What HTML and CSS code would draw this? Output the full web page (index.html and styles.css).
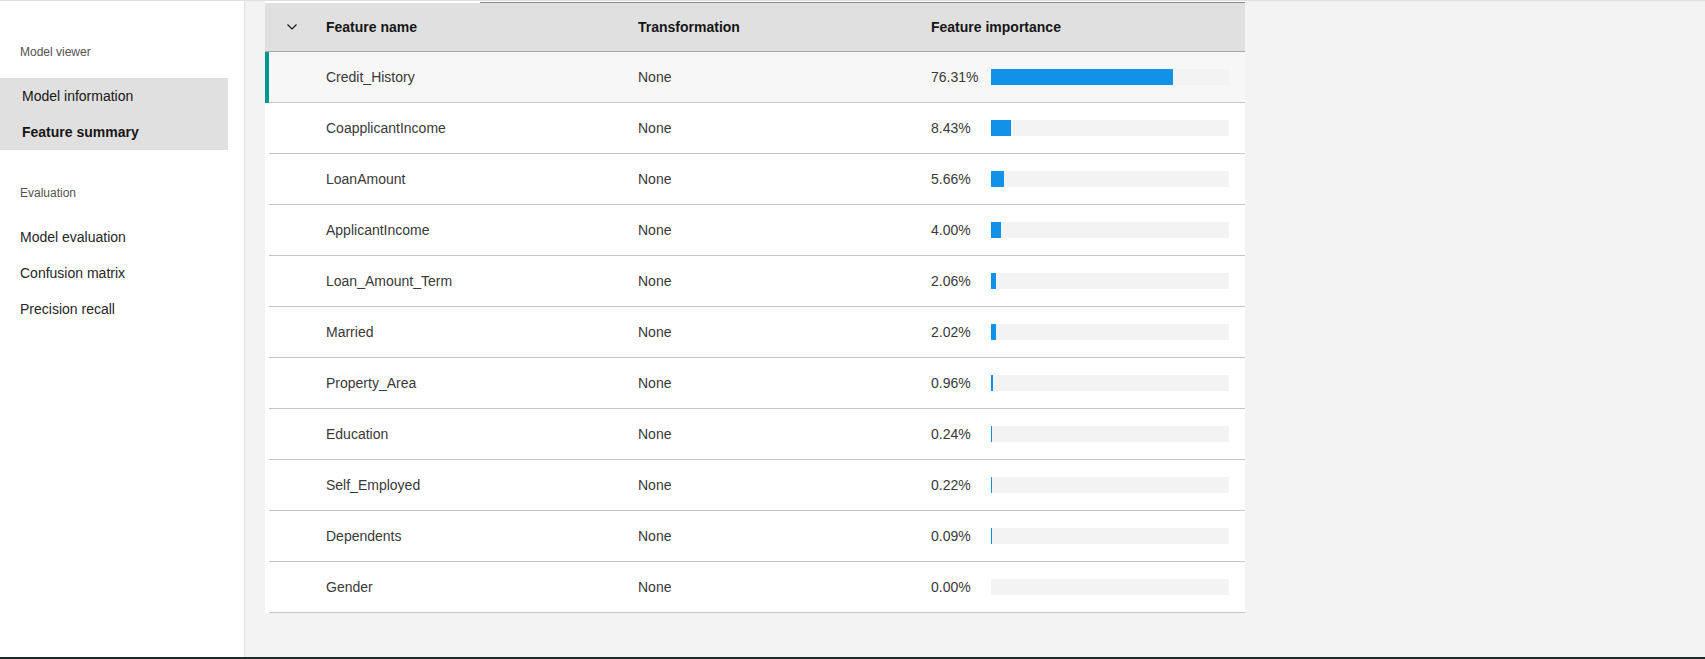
FILE: index.html
```html
<!DOCTYPE html>
<html lang="en">
<head>
<meta charset="utf-8">
<title>Feature summary</title>
<link rel="stylesheet" href="styles.css">
</head>
<body>
<div class="page">
  <aside class="sidebar">
    <div class="nav-label first">Model viewer</div>
    <div class="nav-group active-group">
      <div class="nav-item indent">Model information</div>
      <div class="nav-item indent current">Feature summary</div>
    </div>
    <div class="nav-label second">Evaluation</div>
    <div class="nav-group">
      <div class="nav-item">Model evaluation</div>
      <div class="nav-item">Confusion matrix</div>
      <div class="nav-item">Precision recall</div>
    </div>
  </aside>
  <main class="content">
    <div class="table">
      <div class="table-top"><span class="top-blank"></span><span class="top-line"></span></div>
      <div class="thead">
        <div class="cell-ind"></div>
        <div class="cell-exp">
          <svg width="10" height="6" viewBox="0 0 10 6"><path d="M0.5 0.5 L5 5 L9.5 0.5" fill="none" stroke="#161616" stroke-width="1.2"/></svg>
        </div>
        <div class="cell-name">Feature name</div>
        <div class="cell-trans">Transformation</div>
        <div class="cell-imp">Feature importance</div>
      </div>

      <div class="row hover">
        <div class="cell-ind selected"></div>
        <div class="row-body">
          <div class="cell-exp"></div>
          <div class="cell-name">Credit_History</div>
          <div class="cell-trans">None</div>
          <div class="cell-imp"><span class="pct">76.31%</span><span class="track"><span class="fill nz" style="width:76.31%"></span></span></div>
        </div>
      </div>
      <div class="row">
        <div class="cell-ind"></div>
        <div class="row-body">
          <div class="cell-exp"></div>
          <div class="cell-name">CoapplicantIncome</div>
          <div class="cell-trans">None</div>
          <div class="cell-imp"><span class="pct">8.43%</span><span class="track"><span class="fill nz" style="width:8.43%"></span></span></div>
        </div>
      </div>
      <div class="row">
        <div class="cell-ind"></div>
        <div class="row-body">
          <div class="cell-exp"></div>
          <div class="cell-name">LoanAmount</div>
          <div class="cell-trans">None</div>
          <div class="cell-imp"><span class="pct">5.66%</span><span class="track"><span class="fill nz" style="width:5.66%"></span></span></div>
        </div>
      </div>
      <div class="row">
        <div class="cell-ind"></div>
        <div class="row-body">
          <div class="cell-exp"></div>
          <div class="cell-name">ApplicantIncome</div>
          <div class="cell-trans">None</div>
          <div class="cell-imp"><span class="pct">4.00%</span><span class="track"><span class="fill nz" style="width:4.00%"></span></span></div>
        </div>
      </div>
      <div class="row">
        <div class="cell-ind"></div>
        <div class="row-body">
          <div class="cell-exp"></div>
          <div class="cell-name">Loan_Amount_Term</div>
          <div class="cell-trans">None</div>
          <div class="cell-imp"><span class="pct">2.06%</span><span class="track"><span class="fill nz" style="width:2.06%"></span></span></div>
        </div>
      </div>
      <div class="row">
        <div class="cell-ind"></div>
        <div class="row-body">
          <div class="cell-exp"></div>
          <div class="cell-name">Married</div>
          <div class="cell-trans">None</div>
          <div class="cell-imp"><span class="pct">2.02%</span><span class="track"><span class="fill nz" style="width:2.02%"></span></span></div>
        </div>
      </div>
      <div class="row">
        <div class="cell-ind"></div>
        <div class="row-body">
          <div class="cell-exp"></div>
          <div class="cell-name">Property_Area</div>
          <div class="cell-trans">None</div>
          <div class="cell-imp"><span class="pct">0.96%</span><span class="track"><span class="fill nz" style="width:0.96%"></span></span></div>
        </div>
      </div>
      <div class="row">
        <div class="cell-ind"></div>
        <div class="row-body">
          <div class="cell-exp"></div>
          <div class="cell-name">Education</div>
          <div class="cell-trans">None</div>
          <div class="cell-imp"><span class="pct">0.24%</span><span class="track"><span class="fill nz" style="width:0.24%"></span></span></div>
        </div>
      </div>
      <div class="row">
        <div class="cell-ind"></div>
        <div class="row-body">
          <div class="cell-exp"></div>
          <div class="cell-name">Self_Employed</div>
          <div class="cell-trans">None</div>
          <div class="cell-imp"><span class="pct">0.22%</span><span class="track"><span class="fill nz" style="width:0.22%"></span></span></div>
        </div>
      </div>
      <div class="row">
        <div class="cell-ind"></div>
        <div class="row-body">
          <div class="cell-exp"></div>
          <div class="cell-name">Dependents</div>
          <div class="cell-trans">None</div>
          <div class="cell-imp"><span class="pct">0.09%</span><span class="track"><span class="fill nz" style="width:0.09%"></span></span></div>
        </div>
      </div>
      <div class="row">
        <div class="cell-ind"></div>
        <div class="row-body">
          <div class="cell-exp"></div>
          <div class="cell-name">Gender</div>
          <div class="cell-trans">None</div>
          <div class="cell-imp"><span class="pct">0.00%</span><span class="track"><span class="fill" style="width:0%"></span></span></div>
        </div>
      </div>
    </div>
  </main>
</div>
<div class="taskbar-edge"></div>
</body>
</html>
```

FILE: styles.css
```css
* { box-sizing: border-box; }
html, body { margin: 0; padding: 0; }
body {
  width: 1705px;
  height: 659px;
  overflow: hidden;
  font-family: "Liberation Sans", Arial, sans-serif;
  font-size: 14px;
  color: #161616;
  background: #f3f3f3;
  border-top: 1px solid #e0e0e0;
}
.page {
  display: flex;
  height: 656px;
}
.sidebar {
  width: 245px;
  flex: none;
  background: #ffffff;
  border-right: 1px solid #e0e0e0;
  padding-top: 43px;
  padding-right: 16px;
  display: flex;
  flex-direction: column;
}
.nav-label {
  font-size: 12px;
  line-height: 16px;
  color: #525252;
  padding-left: 20px;
}
.nav-label.first { margin-bottom: 18px; }
.nav-label.second { margin-top: 35px; margin-bottom: 18px; }
.nav-group { display: flex; flex-direction: column; }
.active-group { background: #e0e0e0; }
.nav-item {
  height: 36px;
  line-height: 36px;
  padding-left: 20px;
  color: #262626;
  white-space: nowrap;
}
.nav-item.indent { padding-left: 22px; color: #161616; }
.nav-item.current { font-weight: bold; }

.content {
  flex: 1;
  padding-left: 20px;
}
.table {
  width: 980px;
  background: #ffffff;
}
.table-top {
  display: flex;
  height: 2px;
  background: #ffffff;
}
.top-blank { width: 215px; flex: none; }
.top-line { flex: 1; border-bottom: 1px solid #8d8d8d; }

.thead {
  display: flex;
  height: 49px;
  background: #e0e0e0;
  border-bottom: 1px solid #a8a8a8;
  font-weight: bold;
  color: #161616;
  align-items: center;
}
.cell-ind { width: 4px; flex: none; align-self: stretch; }
.cell-ind.selected { background: #009690; }
.cell-exp {
  width: 45px;
  flex: none;
  display: flex;
  justify-content: center;
  align-items: center;
}
.cell-exp svg { display: block; }
.cell-name { width: 308px; flex: none; padding-left: 12px; white-space: nowrap; }
.cell-trans { width: 293px; flex: none; padding-left: 16px; }
.cell-imp {
  flex: 1;
  padding-left: 16px;
  padding-right: 16px;
  display: flex;
  align-items: center;
}

.row { display: flex; height: 51px; }
.row.hover .row-body { background: #f7f7f7; }
.row-body {
  flex: 1;
  display: flex;
  align-items: center;
  border-bottom: 1px solid #c6c6c6;
  color: #393939;
}
.pct { width: 60px; flex: none; }
.track {
  width: 238px;
  height: 16px;
  background: #f3f3f3;
  display: flex;
}
.fill { height: 16px; background: #1192e8; }
.fill.nz { min-width: 1px; }

.taskbar-edge {
  height: 2px;
  background: #1c2b27;
}
```
